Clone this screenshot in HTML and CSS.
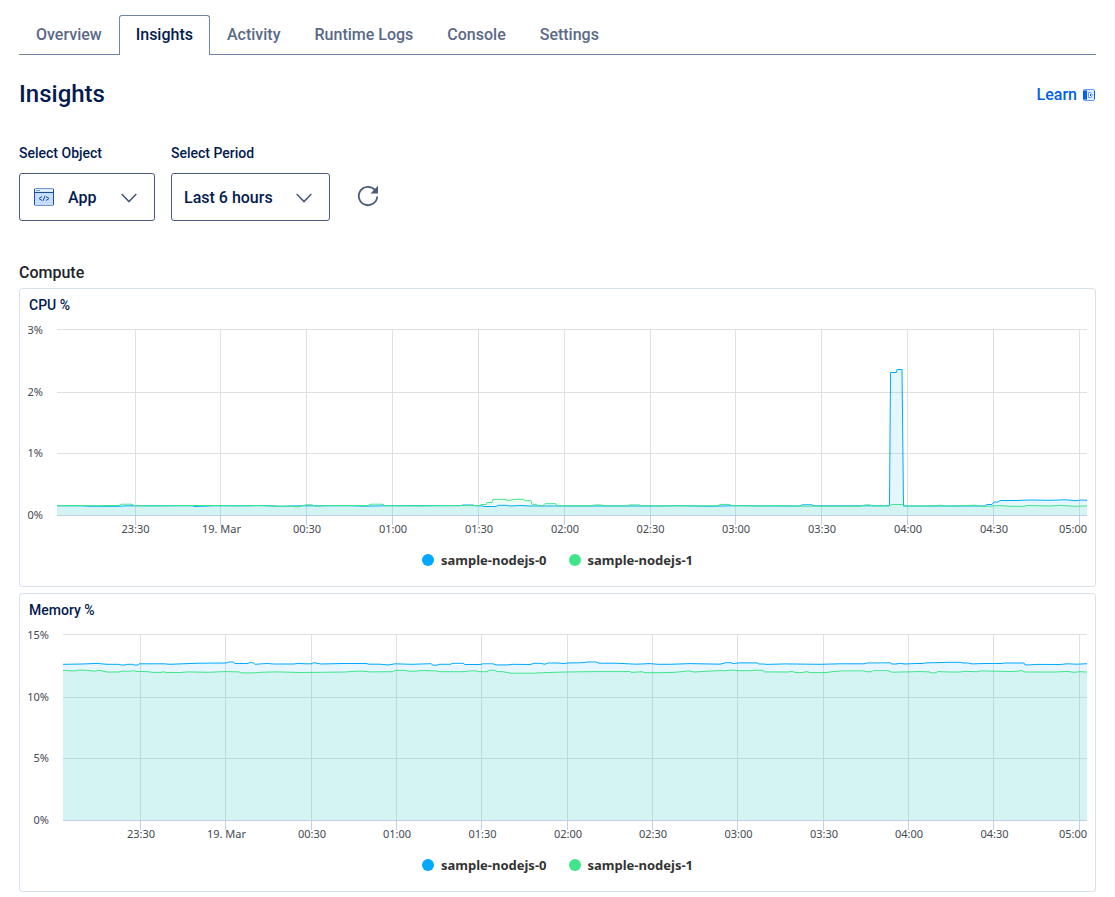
FILE: index.html
```html
<!DOCTYPE html>
<html lang="en">
<head>
<meta charset="utf-8">
<title>Insights</title>
<link rel="stylesheet" href="styles.css">
</head>
<body>
<nav class="tabs">
  <a class="tab" href="#overview">Overview</a>
  <a class="tab tab-active" href="#insights" aria-current="page">Insights</a>
  <a class="tab" href="#activity">Activity</a>
  <a class="tab" href="#logs">Runtime Logs</a>
  <a class="tab" href="#console">Console</a>
  <a class="tab" href="#settings">Settings</a>
</nav>
<main>
  <header class="page-head">
    <h1>Insights</h1>
    <a class="learn" href="#learn">Learn
      <svg class="learn-icon" width="12" height="12" viewBox="0 0 12 12" aria-hidden="true"><rect x=".5" y=".5" width="11" height="11" rx="1.5" fill="#e5efff" stroke="#5c9bff"/><path d="M0 1.500h4v9H0z" fill="#0061eb"/><path d="M11.500 2v8" stroke="#0061eb"/><path d="M5.500 3.500h2L9.500 6 8 8.500H5.500z" fill="#fff" stroke="#5c9bff"/><path d="M7.500 5v2" stroke="#0061eb"/></svg>
    </a>
  </header>
  <form class="filters">
    <div class="field">
      <label for="object">Select Object</label>
      <div class="select-box">
        <svg class="app-icon" width="20" height="18" viewBox="0 0 20 18" aria-hidden="true"><rect x=".5" y=".5" width="19" height="17" rx="1" fill="#c6dcfb" stroke="#6f97d2"/><path d="M1 1.500h18v2H1z" fill="#e9f2ff"/><path d="M.500 1v16M19.500 1v16M1 4.500h18" stroke="#1d4f9f" fill="none"/><path d="M2 2.500h4" stroke="#7ba4df"/><path d="M8 8.500L5 10.500l3 2M12 8.500l3 2-3 2M11 8l-2 5" stroke="#1d4f9f" fill="none"/></svg>
        <select id="object" class="select select-object"><option>App</option></select>
        <svg class="chevron" width="16" height="10" viewBox="0 0 16 10" aria-hidden="true"><path d="M.700 1L8 8.500 15.300 1" fill="none" stroke="#4a5b7c" stroke-width="1.600"/></svg>
      </div>
    </div>
    <div class="field">
      <label for="period">Select Period</label>
      <div class="select-box">
        <select id="period" class="select select-period"><option>Last 6 hours</option></select>
        <svg class="chevron" width="16" height="10" viewBox="0 0 16 10" aria-hidden="true"><path d="M.700 1L8 8.500 15.300 1" fill="none" stroke="#4a5b7c" stroke-width="1.600"/></svg>
      </div>
    </div>
    <button class="refresh" type="button" aria-label="Refresh"><svg width="22" height="22" viewBox="0 0 22 22" aria-hidden="true"><path d="M18 5A9.200 9.200 0 1 0 20.200 11.500" fill="none" stroke="#4a5b7c" stroke-width="1.800"/><path d="M21 .8v7.700h-7.500z" fill="#4a5b7c"/></svg></button>
  </form>
  <h2>Compute</h2>
  <section class="card">
    <h3>CPU %</h3>
    <svg class="chart" viewBox="20 319 1075 220" role="img" aria-label="CPU usage">
      <path class="grid" d="M57 329.500H1087M57 392.500H1087M57 453.500H1087M135.500 329V515M220.500 329V515M306.500 329V515M392.500 329V515M478.500 329V515M564.500 329V515M650.500 329V515M735.500 329V515M821.500 329V515M907.500 329V515M993.500 329V515M1079.500 329V515"/>
      <path class="axis" d="M57 515.500H1087M135.500 515V525M220.500 515V525M306.500 515V525M392.500 515V525M478.500 515V525M564.500 515V525M650.500 515V525M735.500 515V525M821.500 515V525M907.500 515V525M993.500 515V525M1079.500 515V525"/>
      <path class="fill-0" d="M57 515V505.800H482L484 506.500H496L498 505.300H510L516 506L889.500 506 890.500 372.500H896.500L897 369.500H902L903.500 506 985 506 987 504.500H993L994 502H999L1000 500.300 1087 500.300V515z"/>
      <path class="line-0" d="M57 505.800H82L90 506.300H120L126 505.800 135 505.800H192L195 506.500 215 505.800H250L262 505.500 280 506.300 300 505.800H350L365 506.200 390 505.700H460L463 505H473L475 505.800H482L484 506.500H496L498 505.300H506L510 506 522 505.500 530 506H660L680 505.700 710 506.300 735 505.700 780 506H800L802 504.800H812L814 505.800H889.500L890.500 372.500H896.500L897 369.500H902L903.500 506H985L987 504.500H992L994 502H998L1000 500.500H1015L1030 500 1050 500.300 1065 499.800 1076 500.700 1081 500 1087 500.300"/>
      <path class="fill-1" d="M57 515V505.800H486V502.500H492L493 499.300H505L507 500.300H511L513 499.300H524L525 500.700H531L532 504.300H537L538 505.500H543L545 503.700H556L557 505.800H1087V515z"/>
      <path class="line-1" d="M57 505.600H90L98 505.800 105 505.500H119L121 504.200H132L134 505.500 150 506 180 505.500H215L240 505.800 255 505.500 280 506.300H288L290 505.800 295 506.800H299L301 505.800 307 504.800H312L315 506.200 330 505.500H368L371 504.200H383L385 505.700 420 506 440 505.600H480L481 504.500H486L487 502.500H492L493 499.300H505L507 500.300H511L513 499.300H524L525 500.700H531L532 504.300H537L538 505.500H543L545 503.700H556L557 505.700H590L596 504.900H600L605 505.800H627L630 504.900H639L641 505.800H717L721 504.400H729L732 505.700 760 506 780 505.600 800 506.200H860L865 504.900H870L873 505.900H889L892 504.500H902L904 506H930L941 505.200 948 506.200 975 505.200 980 506.200H990L1000 505.500 1010 506.300H1024L1027 505.500 1050 506 1060 505.300 1075 506.300 1087 505.800"/>
      <g class="labels y-labels"><text x="43" y="334">3%</text><text x="43" y="396">2%</text><text x="43" y="457">1%</text><text x="43" y="519">0%</text></g>
      <g class="labels"><text x="135.500" y="533">23:30</text><text x="221.500" y="533">19. Mar</text><text x="307" y="533">00:30</text><text x="393" y="533">01:00</text><text x="479" y="533">01:30</text><text x="565" y="533">02:00</text><text x="650.500" y="533">02:30</text><text x="736" y="533">03:00</text><text x="822" y="533">03:30</text><text x="908" y="533">04:00</text><text x="994" y="533">04:30</text><text x="1073" y="533">05:00</text></g>
    </svg>
    <ul class="legend"><li class="key-0">sample-nodejs-0</li><li class="key-1">sample-nodejs-1</li></ul>
  </section>
  <section class="card card-next">
    <h3>Memory %</h3>
    <svg class="chart" viewBox="20 624 1075 220" role="img" aria-label="Memory usage">
      <path class="grid" d="M63 634.500H1087M63 697.500H1087M63 758.500H1087M140.500 634V820M225.500 634V820M311.500 634V820M396.500 634V820M481.500 634V820M567.500 634V820M652.500 634V820M737.500 634V820M823.500 634V820M908.500 634V820M993.500 634V820M1079.500 634V820"/>
      <path class="axis" d="M63 820.500H1087M140.500 820V830M225.500 820V830M311.500 820V830M396.500 820V830M481.500 820V830M567.500 820V830M652.500 820V830M737.500 820V830M823.500 820V830M908.500 820V830M993.500 820V830M1079.500 820V830"/>
      <path class="fill-0" d="M63 820V664L107 664 120 665H138L139 664 228 663 244 663.500 255 665 300 663.500 385 664 450 665 496 665 566 663 598 663 640 664 757 663 758 664.300 866 663.700 960 662.700 1024 663 1025 665 1087 664V820z"/>
      <path class="line-0" d="M63 664.300L82 664 97 663.400 107 664.300H119L121 665H125L127 664.300H133L134 665H138L139 663.800H164L170 664.300 185 663.700 200 663.200 226 663 229 662H233L235 663.500H247L250 662.700H253L255 664.300 267 663.500 274 664H294L298 663.300 305 663.800H311L314 662.700 321 664 342 663.500H366L369 664.200H380L388 665 395 663.800 412 664.300 431 663.700 433 665.200H437L439 664.300H450L453 663.300H463L465 664.500H480L483 663.800H493L496 664.900H508L512 664.300 530 664.500 534 663.300H540L545 664.200 548 663H558L564 663.600 567 663 582 662.700 588 662H596L599 663.200H616L636 664.200 650 663.600 658 664.300H670L690 663.600 720 664.200 726 662.700H731L733 663.500 739 662.900H757L759 664H764L767 664.400 785 663.900 820 664.300 840 663.800H864L867 663 890 662.800 892 664H896L900 663.300 905 664 915 663.500H922L926 662.900 950 662.300H960L963 663H968L972 663.900 984 663.500H1001L1005 663H1024L1025 664.900H1030L1036 664.400 1060 664.500 1067 663.800 1077 664.200 1087 663.700"/>
      <path class="fill-1" d="M63 820V670.700L101 670.700 109 672 121 671.500 152 672.300 240 672.200 252 673 320 672.300 394 672 396 671 436 671.300 487 671.800 490 670.300 495 670.500 510 673H533L565 672 720 671.500 733 670.300 763 670.500 764 672H890L932 672.500 1020 671 1024 672 1087 672V820z"/>
      <path class="line-1" d="M63 670.400H67L69 670.900H75L78 670.200H86L92 671H96L98 670.400H100L107 672H119L122 671.200H131L133 670.700 136 671.400 148 671.700 153 672.400H161L163 671.800 167 672.500H180L188 671.900 208 672.300 225 671.600 239 671.900 241 672.900H253L263 672.200 277 671.900 300 672.500 330 672.200 345 672 357 671.200H363L370 671.900 393 671.700 395 670.400H405L409 671.200H416L421 670.500 436 670.900 440 671.700H463L470 670.900H476L479 671.700H487L489 670.200H495L497 671.600H502L511 673.200H533L545 672.600 565 672 595 671.600H625L629 671.400 632 672.400 642 671.700 645 672.700H660L675 672.300 689 670.900 694 672 706 671.300 718 670.700H725L733 670 738 670.700H750L755 670.200H763L764 671.900 789 672 791 671.300 796 672.600H802L807 671.600 810 672.600H826L832 671.700 842 670.900H864L866 671.700H872L873 670.700H888L892 672.200 920 671.600 929 671.900 932 672.900H935L938 671.600 950 672H960L965 671.300 977 671.800 981 670.900 1010 671.500 1018 671.200 1021 670.400 1025 672H1055L1067 671.400 1074 672.300 1080 671.700 1087 672"/>
      <g class="labels y-labels"><text x="49" y="639">15%</text><text x="49" y="701">10%</text><text x="49" y="762">5%</text><text x="49" y="824">0%</text></g>
      <g class="labels"><text x="141" y="838">23:30</text><text x="226.500" y="838">19. Mar</text><text x="312" y="838">00:30</text><text x="397" y="838">01:00</text><text x="482.500" y="838">01:30</text><text x="568" y="838">02:00</text><text x="653" y="838">02:30</text><text x="738.500" y="838">03:00</text><text x="824" y="838">03:30</text><text x="909" y="838">04:00</text><text x="994.500" y="838">04:30</text><text x="1073" y="838">05:00</text></g>
    </svg>
    <ul class="legend"><li class="key-0">sample-nodejs-0</li><li class="key-1">sample-nodejs-1</li></ul>
  </section>
</main>
</body>
</html>
```
FILE: styles.css
```css
* { box-sizing: border-box; }
body {
  margin: 0;
  padding: 15px 19px 4px;
  background: #fff;
  color: #031b4e;
  font-family: Roboto, "Liberation Sans", sans-serif;
  font-size: 16px;
  font-weight: 500;
}
h1, h2, h3 { margin: 0; font-weight: 500; }
.tabs { display: flex; height: 40px; border-bottom: 1px solid #7184a8; }
.tab {
  height: 40px;
  padding: 0 16px;
  border: 1px solid transparent;
  border-bottom: 0;
  color: #5b6987;
  line-height: 38px;
  text-decoration: none;
}
.tab-active {
  border-color: #7184a8;
  border-radius: 3px 3px 0 0;
  background: #fff;
  color: #031b4e;
}
.page-head { display: flex; justify-content: space-between; align-items: center; margin-top: 23px; }
h1 { font-size: 24px; line-height: 32px; }
.learn { display: flex; align-items: center; gap: 6px; padding-right: 1px; color: #0061eb; text-decoration: none; }
.learn-icon { margin-top: 2px; }
.filters { display: flex; align-items: flex-end; gap: 16px; margin-top: 33px; }
.field label { display: block; font-size: 14px; line-height: 20px; margin-bottom: 10px; }
.select-box { position: relative; }
.select {
  display: block;
  height: 48px;
  appearance: none;
  border: 1px solid #4a5b7c;
  border-radius: 3px;
  background: #fff;
  color: #031b4e;
  font: inherit;
}
.select-object { width: 136px; padding: 0 40px 0 48px; }
.select-period { width: 159px; padding: 0 40px 0 12px; }
.app-icon { position: absolute; left: 15px; top: 15px; }
.chevron { position: absolute; right: 18px; top: 20px; pointer-events: none; }
.refresh { display: flex; margin: 0 0 14px 11px; padding: 0; border: 0; background: none; }
h2 { margin-top: 42px; color: #1f2328; font-size: 16px; line-height: 20px; }
.card { margin-top: 5px; border: 1px solid #d8e0ec; border-radius: 3px; }
.card-next { margin-top: 6px; }
h3 { padding: 6px 9px 4px; font-size: 14px; line-height: 20px; }
.chart { display: block; width: 100%; }
.grid, .axis, .line-0, .line-1 { fill: none; stroke-width: 1; }
.grid { stroke: #e0e0e0; }
.axis { stroke: #c0d0e8; }
.line-0 { stroke: #00a9ff; }
.line-1 { stroke: #40e58b; }
.fill-0 { fill: #00a9ff; fill-opacity: 0.1; }
.fill-1 { fill: #40e58b; fill-opacity: 0.1; }
.labels { fill: #444a52; font: 400 11px "Noto Sans", sans-serif; text-anchor: middle; }
.y-labels { text-anchor: end; }
.legend {
  display: flex;
  justify-content: center;
  gap: 22px;
  height: 47px;
  margin: 0;
  padding: 11px 0 0;
  list-style: none;
  color: #333;
  font: 700 13px/20px "Noto Sans", sans-serif;
}
.legend li { display: flex; align-items: center; align-self: flex-start; gap: 7px; }
.legend li::before { content: ""; width: 12px; height: 12px; border-radius: 50%; }
.key-0::before { background: #00a9ff; }
.key-1::before { background: #40e58b; }
```
